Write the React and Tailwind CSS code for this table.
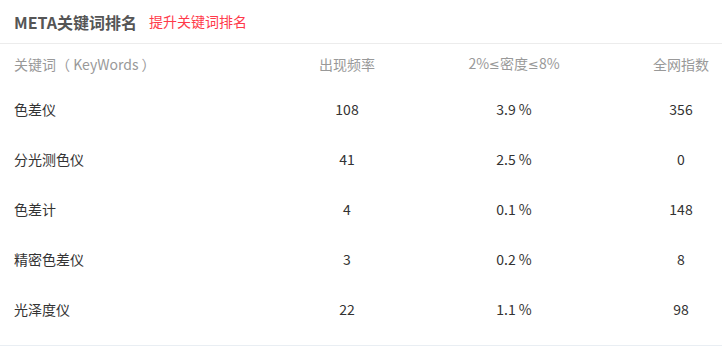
const ROWS = [
  { word: '色差仪', freq: '108', density: '3.9 %', index: '356' },
  { word: '分光测色仪', freq: '41', density: '2.5 %', index: '0' },
  { word: '色差计', freq: '4', density: '0.1 %', index: '148' },
  { word: '精密色差仪', freq: '3', density: '0.2 %', index: '8' },
  { word: '光泽度仪', freq: '22', density: '1.1 %', index: '98' },
]

const FONT = "font-['Noto_Sans_CJK_SC','Noto_Sans',sans-serif]"
const GRID = 'grid grid-cols-[280px_134px_200px_1fr] items-center'

const Le = () => <span className="font-['DejaVu_Sans',sans-serif] text-[13px]">≤</span>

export default function App() {
  return (
    <div className={`w-[722px] h-[346px] bg-white ${FONT} flex flex-col`}>
      {/* Title */}
      <div className="h-[44px] border-b border-[#ececec] flex items-center px-[14px] gap-[12px]">
        <span className="text-[16px] font-bold text-[#555]">META关键词排名</span>
        <span className="text-[14px] text-[#ff3a4a]">提升关键词排名</span>
      </div>

      {/* Header */}
      <div className={`${GRID} h-[40px] text-[14px] text-[#999]`}>
        <div className="pl-[14px]">关键词（ KeyWords ）</div>
        <div className="text-center">出现频率</div>
        <div className="text-center">2%<Le />密度<Le />8%</div>
        <div className="text-center pl-[26px]">全网指数</div>
      </div>

      {/* Rows */}
      <div className="flex-1">
        {ROWS.map(r => (
          <div key={r.word} className={`${GRID} h-[50px] text-[14px] text-[#333]`}>
            <div className="pl-[14px]">{r.word}</div>
            <div className="text-center">{r.freq}</div>
            <div className="text-center">{r.density}</div>
            <div className="text-center pl-[26px]">{r.index}</div>
          </div>
        ))}
      </div>

      <div className="h-px bg-[#e9eef3]" />
    </div>
  )
}
